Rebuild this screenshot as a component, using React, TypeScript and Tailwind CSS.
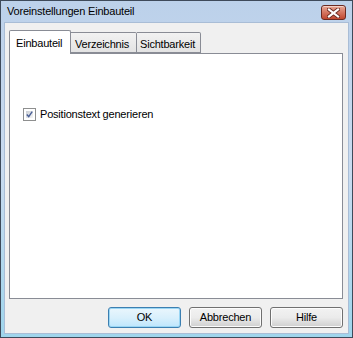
import React from 'react';

const font = { fontFamily: '"Liberation Sans", Arial, sans-serif' };

function CloseButton() {
  return (
    <div className="w-[25px] h-[15px] mt-[2px] rounded-[3px] border border-[#6b2a22] bg-gradient-to-b from-[#e8a795] via-[#d47561] to-[#c0462f] flex items-center justify-center shadow-[inset_0_1px_0_rgba(255,255,255,0.5)]">
      <svg width="13" height="10" viewBox="0 0 13 10">
        <path d="M2 1.5 L11 8.5 M11 1.5 L2 8.5" stroke="#6a2a22" strokeWidth="4" strokeLinecap="square" />
        <path d="M2 1.5 L11 8.5 M11 1.5 L2 8.5" stroke="#ffffff" strokeWidth="2.2" strokeLinecap="square" />
      </svg>
    </div>
  );
}

function Checkbox() {
  return (
    <div className="w-[13px] h-[13px] border border-[#8e8f8f] bg-white p-[2px]">
      <div className="w-full h-full bg-gradient-to-br from-[#cbcfd5] to-[#f6f6f6] flex items-center justify-center">
        <svg width="9" height="9" viewBox="0 0 9 9">
          <path d="M1 4.5 L3.5 7.2 L8 0.8" fill="none" stroke="#4a5f97" strokeWidth="1.8" />
        </svg>
      </div>
    </div>
  );
}

function Button({ label, primary }: { label: string; primary?: boolean }) {
  return (
    <div
      className={
        'w-[73px] h-[21px] rounded-[3px] border flex items-center justify-center text-[11px] text-black ' +
        (primary
          ? 'border-[#3c7fb1] bg-gradient-to-b from-[#eaf6fd] via-[#d9f0fc] to-[#bee6fd] shadow-[inset_0_0_0_1px_#9ad6f4]'
          : 'border-[#707070] bg-gradient-to-b from-[#f2f2f2] via-[#ebebeb] to-[#cfcfcf] shadow-[inset_0_0_0_1px_#fcfcfc]')
      }
    >
      {label}
    </div>
  );
}

export default function App() {
  return (
    <div className="w-[353px] h-[338px] overflow-hidden tracking-[-0.2px]" style={font}>
      <div className="w-full h-full border border-[#3e4a5a] bg-gradient-to-b from-[#bcd1ea] via-[#c9dbf0] to-[#9fd5ec] flex flex-col">
        {/* title bar */}
        <div className="h-[21px] flex items-center justify-between pl-[6px] pr-[6px]">
          <span className="text-[11px] text-black leading-none">Voreinstellungen Einbauteil</span>
          <CloseButton />
        </div>
        {/* client */}
        <div className="flex-1 mx-[3px] mb-[3px] bg-[#f0f0f0] border border-[#a9bdd6] flex flex-col px-[4px]">
          <div className="flex items-end h-[30px] pt-[6px]">
            <div className="relative z-10 -mb-px h-[24px] w-[62px] bg-white border border-b-0 border-[#898c95] rounded-t-[2px] text-[11px] pl-[6px] pt-[4px]">
              Einbauteil
            </div>
            <div className="h-[21px] w-[66px] border border-l-0 border-[#898c95] rounded-tr-[2px] bg-gradient-to-b from-[#f2f2f2] to-[#e3e3e3] text-[11px] pl-[4px] pt-[3px]">
              Verzeichnis
            </div>
            <div className="h-[21px] w-[64px] border border-l-0 border-[#898c95] rounded-tr-[2px] bg-gradient-to-b from-[#f2f2f2] to-[#e3e3e3] text-[11px] pl-[3px] pt-[3px]">
              Sichtbarkeit
            </div>
          </div>
          <div className="h-[246px] w-[334px] border border-[#898c95] bg-white pt-[52px] pl-[13px]">
            <div className="flex items-center gap-[4px] text-[11px]">
              <Checkbox />
              <span>Positionstext generieren</span>
            </div>
          </div>
          <div className="flex justify-end gap-[8px] mt-[8px] w-[334px]">
            <Button label="OK" primary />
            <Button label="Abbrechen" />
            <Button label="Hilfe" />
          </div>
        </div>
      </div>
    </div>
  );
}
